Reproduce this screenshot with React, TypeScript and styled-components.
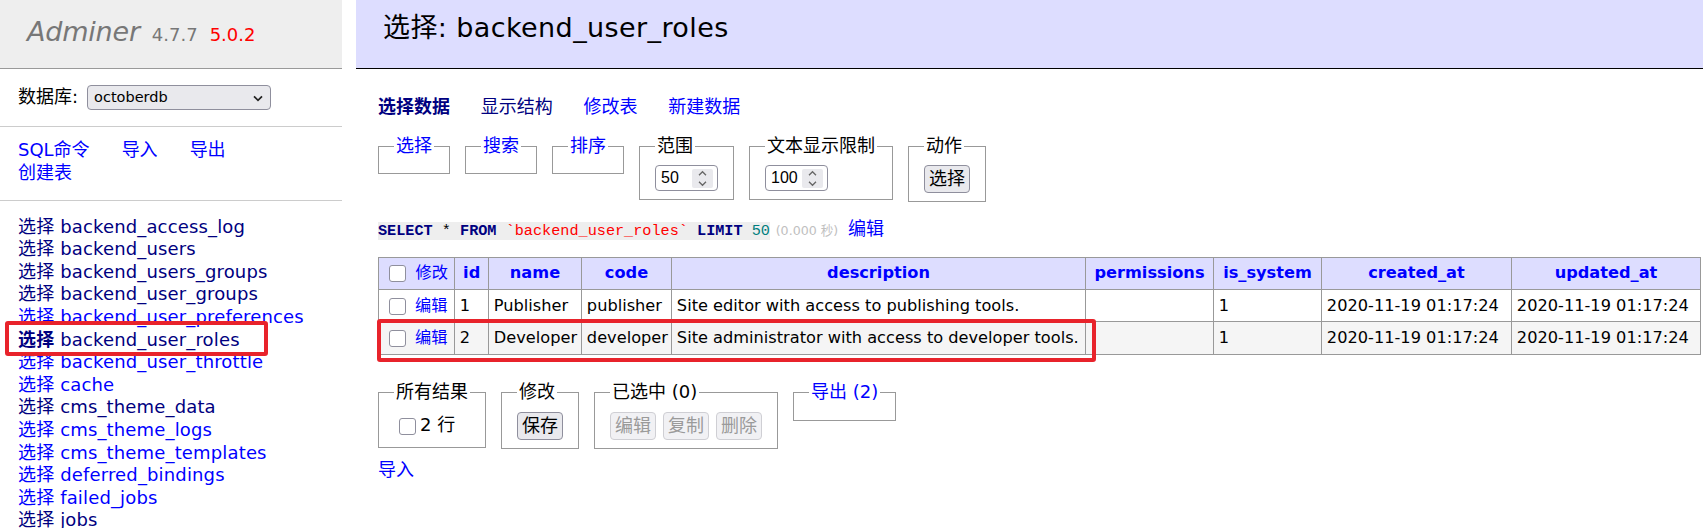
import React from "react";
import styled, { createGlobalStyle } from "styled-components";

const GlobalStyle = createGlobalStyle`
  html, body { margin: 0; padding: 0; background: #fff; }
  body {
    color: #000;
    font: 18px/1.25 "DejaVu Sans", "Noto Sans CJK SC", sans-serif;
  }
  a { text-decoration: none; }
`;

const Page = styled.div`
  display: flex;
  align-items: flex-start;
  width: 1703px;
`;

/* ---------- Sidebar ---------- */
const Sidebar = styled.aside`
  position: relative;
  flex: none;
  width: 342px;
  margin-right: 14px;
`;

const Brand = styled.h1`
  margin: 0;
  height: 53.3px;
  padding: 14.7px 27px 0;
  background: #eee;
  border-bottom: 1px solid #999;
  font-size: 27px;
  line-height: 34px;
  font-weight: normal;
  white-space: nowrap;
`;

const BrandName = styled.a`
  color: #777;
  font-style: italic;
  letter-spacing: -0.2px;
`;

const Version = styled.span`
  margin-left: 12px;
  font-size: 18px;
  color: #777;
`;

const VersionLink = styled.a`
  margin-left: 12px;
  color: red;
`;

const DbRow = styled.form`
  display: flex;
  align-items: center;
  height: 57px;
  padding: 0 18px;
  border-bottom: 1px solid #ccc;
`;

const SelectWrap = styled.span`
  position: relative;
  display: inline-flex;
  margin-left: 9px;
`;

const Select = styled.select`
  appearance: none;
  -webkit-appearance: none;
  box-sizing: border-box;
  width: 184px;
  height: 25px;
  padding: 0 24px 0 6px;
  border: 1px solid #8f8f9d;
  border-radius: 4px;
  background: #e9e9ed;
  color: #000;
  font: 14.5px "DejaVu Sans", sans-serif;
`;

const Chevron = styled.svg`
  position: absolute;
  right: 8px;
  top: 10px;
  pointer-events: none;
`;

const SideLinks = styled.div`
  padding: 12.5px 18px 16px;
  border-bottom: 1px solid #ccc;
`;

const SideLinkRow = styled.div`
  height: 22.5px;
  white-space: nowrap;
`;

const SideLink = styled.a`
  color: blue;
  margin-right: 32px;
`;

const TableList = styled.ul`
  margin: 0;
  padding: 14.2px 18px 0;
  list-style: none;
  white-space: nowrap;
  letter-spacing: 0.15px;
`;

const TableItem = styled.li`
  height: 22.6px;
`;

const NavLink = styled.a<{ $visited?: boolean; $active?: boolean }>`
  color: ${(p) => (p.$visited ? "navy" : "blue")};
  font-weight: ${(p) => (p.$active ? "bold" : "normal")};
`;

const SideHighlight = styled.div`
  position: absolute;
  left: 5px;
  top: 320.5px;
  width: 263px;
  height: 35px;
  box-sizing: border-box;
  border: 4px solid #e8232b;
  border-radius: 3px;
  pointer-events: none;
`;

/* ---------- Main ---------- */
const Main = styled.main`
  flex: 1;
  min-width: 0;
`;

const TitleBar = styled.h2`
  margin: 0;
  height: 57.5px;
  padding: 10.5px 27px 0;
  background: #ddf;
  border-bottom: 1px solid #000;
  font-size: 27px;
  line-height: 34px;
  font-weight: normal;
  letter-spacing: 0.4px;
  white-space: nowrap;
`;

const Content = styled.div`
  padding-left: 22px;
`;

const LinksRow = styled.p`
  margin: 26.5px 0 0;
  height: 22.5px;
  white-space: nowrap;
`;

const TabLink = styled.a<{ $visited?: boolean; $active?: boolean }>`
  color: ${(p) => (p.$visited ? "navy" : "blue")};
  font-weight: ${(p) => (p.$active ? "bold" : "normal")};
  margin-right: 25px;
`;

const FieldsetRow = styled.div<{ $top: number }>`
  display: flex;
  align-items: flex-start;
  gap: 15px;
  margin-top: ${(p) => p.$top}px;
`;

const Fieldset = styled.fieldset`
  margin: 0;
  min-width: 0;
  padding: 7.5px 15px 8px;
  border: 1px solid #999;
`;

const Legend = styled.legend<{ $link?: boolean }>`
  padding: 0 2px;
  height: 23px;
  line-height: 21px;
  white-space: nowrap;
  color: ${(p) => (p.$link ? "blue" : "#000")};
`;

const FieldBody = styled.div<{ $h?: number }>`
  display: flex;
  align-items: center;
  gap: 7px;
  height: ${(p) => (p.$h ? `${p.$h}px` : "auto")};
  white-space: nowrap;
`;

const NumberBox = styled.label`
  box-sizing: border-box;
  display: flex;
  align-items: center;
  width: 63px;
  height: 26px;
  padding: 0 4px 0 5px;
  border: 1px solid #8f8f9d;
  border-radius: 4px;
  background: #fff;
`;

const NumberInput = styled.input`
  flex: 1;
  min-width: 0;
  width: 0;
  border: 0;
  padding: 0;
  outline: none;
  background: transparent;
  color: #000;
  font: 16px "Liberation Sans", sans-serif;
`;

const Spinner = styled.svg`
  flex: none;
  background: #e9e9ed;
  border-radius: 2px;
`;

const Button = styled.button<{ $disabled?: boolean }>`
  box-sizing: border-box;
  display: inline-flex;
  align-items: center;
  justify-content: center;
  height: 28px;
  padding: 0 4px;
  border: 1px solid ${(p) => (p.$disabled ? "#cfcfd4" : "#8f8f9d")};
  border-radius: 4px;
  background: ${(p) => (p.$disabled ? "#f1f1f4" : "#e9e9ed")};
  color: ${(p) => (p.$disabled ? "#9a9a9a" : "#000")};
  font: 18px/20px "DejaVu Sans", "Noto Sans CJK SC", sans-serif;
`;

const Check = styled.input.attrs({ type: "checkbox" })`
  appearance: none;
  -webkit-appearance: none;
  box-sizing: border-box;
  width: 17px;
  height: 17px;
  margin: 0 4px 0 5px;
  border: 1px solid #8f8f9d;
  border-radius: 3px;
  background: #fff;
  vertical-align: middle;
`;

const QueryLine = styled.p`
  margin: 15.9px 0 0;
  height: 24px;
  white-space: nowrap;
`;

const Code = styled.code`
  background: #eee;
  font: 15.2px/1.25 "Liberation Mono", monospace;
`;

const Kw = styled.a`
  color: navy;
  font-weight: bold;
`;

const Bac = styled.span`
  color: red;
`;

const Num = styled.span`
  color: #007f7f;
`;

const Time = styled.span`
  color: silver;
  font-size: 12.6px;
`;

const EditLink = styled.a`
  margin-left: 4px;
  color: blue;
`;

const TableWrap = styled.div`
  position: relative;
  margin-top: 15.1px;
  width: 1322px;
`;

const Grid = styled.table`
  table-layout: fixed;
  width: 1322px;
  border-collapse: collapse;
  font-size: 16.2px;
`;

const HeadRow = styled.tr`
  height: 32px;
`;

const BodyRow = styled.tr<{ $odd?: boolean }>`
  height: 32.5px;
  background: ${(p) => (p.$odd ? "#f5f5f5" : "#fff")};
`;

const HeadCell = styled.th<{ $left?: boolean }>`
  padding: 3.24px ${(p) => (p.$left ? "4.86px" : "8.1px")};
  border: 1px solid #999;
  background: #ddf;
  text-align: ${(p) => (p.$left ? "left" : "center")};
  white-space: nowrap;
  overflow: hidden;
`;

const HeadLink = styled.a<{ $bold?: boolean }>`
  color: blue;
  font-weight: ${(p) => (p.$bold ? "bold" : "normal")};
`;

const Cell = styled.td`
  padding: 3.24px 4.86px;
  border: 1px solid #999;
  white-space: nowrap;
  overflow: hidden;
`;

const CellLink = styled.a`
  color: blue;
`;

const RowHighlight = styled.div`
  position: absolute;
  left: -1px;
  top: 62px;
  width: 719px;
  height: 43px;
  box-sizing: border-box;
  border: 4px solid #e8232b;
  border-radius: 3px;
  pointer-events: none;
`;

const ImportRow = styled.p`
  margin: 10.4px 0 0;
  height: 22.5px;
`;

const ImportLink = styled.a`
  color: blue;
`;

/* ---------- Data ---------- */
const tables: { name: string; visited?: boolean; active?: boolean }[] = [
  { name: "backend_access_log", visited: true },
  { name: "backend_users", visited: true },
  { name: "backend_users_groups", visited: true },
  { name: "backend_user_groups", visited: true },
  { name: "backend_user_preferences" },
  { name: "backend_user_roles", visited: true, active: true },
  { name: "backend_user_throttle" },
  { name: "cache" },
  { name: "cms_theme_data", visited: true },
  { name: "cms_theme_logs" },
  { name: "cms_theme_templates" },
  { name: "deferred_bindings" },
  { name: "failed_jobs" },
  { name: "jobs", visited: true },
];

const columns = ["id", "name", "code", "description", "permissions", "is_system", "created_at", "updated_at"];
const widths = [76, 34, 93, 90, 414, 128, 108, 190, 189];

const rows = [
  ["1", "Publisher", "publisher", "Site editor with access to publishing tools.", "", "1", "2020-11-19 01:17:24", "2020-11-19 01:17:24"],
  ["2", "Developer", "developer", "Site administrator with access to developer tools.", "", "1", "2020-11-19 01:17:24", "2020-11-19 01:17:24"],
];

const SpinIcon = () => (
  <Spinner width="21" height="19" viewBox="0 0 21 19">
    <path d="M7 6.2 L10.5 2.7 L14 6.2" fill="none" stroke="#666" strokeWidth="1.3" />
    <path d="M7 12.8 L10.5 16.3 L14 12.8" fill="none" stroke="#666" strokeWidth="1.3" />
  </Spinner>
);

const NumberField = ({ value }: { value: string }) => (
  <NumberBox>
    <NumberInput type="text" defaultValue={value} />
    <SpinIcon />
  </NumberBox>
);

export default function App() {
  return (
    <>
      <GlobalStyle />
      <Page>
        <Sidebar>
          <Brand>
            <BrandName>Adminer</BrandName>
            <Version>
              4.7.7
              <VersionLink>5.0.2</VersionLink>
            </Version>
          </Brand>
          <DbRow>
            数据库:
            <SelectWrap>
              <Select defaultValue="octoberdb">
                <option value="octoberdb">octoberdb</option>
              </Select>
              <Chevron width="10" height="7" viewBox="0 0 10 7">
                <path d="M1 1.3 L5 5.3 L9 1.3" fill="none" stroke="#222" strokeWidth="1.7" />
              </Chevron>
            </SelectWrap>
          </DbRow>
          <SideLinks>
            <SideLinkRow>
              <SideLink>SQL命令</SideLink>
              <SideLink>导入</SideLink>
              <SideLink>导出</SideLink>
            </SideLinkRow>
            <SideLinkRow>
              <SideLink>创建表</SideLink>
            </SideLinkRow>
          </SideLinks>
          <TableList>
            {tables.map((t) => (
              <TableItem key={t.name}>
                <NavLink $visited={t.visited} $active={t.active}>选择</NavLink>{" "}
                <NavLink $visited={t.visited}>{t.name}</NavLink>
              </TableItem>
            ))}
          </TableList>
          <SideHighlight />
        </Sidebar>

        <Main>
          <TitleBar>选择: backend_user_roles</TitleBar>
          <Content>
            <LinksRow>
              <TabLink $visited $active>选择数据</TabLink>{" "}
              <TabLink $visited>显示结构</TabLink>{" "}
              <TabLink>修改表</TabLink>{" "}
              <TabLink>新建数据</TabLink>
            </LinksRow>

            <FieldsetRow $top={16.5}>
              <Fieldset>
                <Legend $link>选择</Legend>
              </Fieldset>
              <Fieldset>
                <Legend $link>搜索</Legend>
              </Fieldset>
              <Fieldset>
                <Legend $link>排序</Legend>
              </Fieldset>
              <Fieldset>
                <Legend>范围</Legend>
                <FieldBody>
                  <NumberField value="50" />
                </FieldBody>
              </Fieldset>
              <Fieldset>
                <Legend>文本显示限制</Legend>
                <FieldBody>
                  <NumberField value="100" />
                </FieldBody>
              </Fieldset>
              <Fieldset>
                <Legend>动作</Legend>
                <FieldBody>
                  <Button type="button">选择</Button>
                </FieldBody>
              </Fieldset>
            </FieldsetRow>

            <QueryLine>
              <Code>
                <Kw>SELECT</Kw> * <Kw>FROM</Kw> <Bac>`backend_user_roles`</Bac> <Kw>LIMIT</Kw> <Num>50</Num>
              </Code>{" "}
              <Time>(0.000 秒)</Time>{" "}
              <EditLink>编辑</EditLink>
            </QueryLine>

            <TableWrap>
              <Grid>
                <colgroup>
                  {widths.map((w, i) => (
                    <col key={i} style={{ width: w }} />
                  ))}
                </colgroup>
                <thead>
                  <HeadRow>
                    <HeadCell $left>
                      <Check />{" "}
                      <HeadLink>修改</HeadLink>
                    </HeadCell>
                    {columns.map((c) => (
                      <HeadCell key={c}>
                        <HeadLink $bold>{c}</HeadLink>
                      </HeadCell>
                    ))}
                  </HeadRow>
                </thead>
                <tbody>
                  {rows.map((r, i) => (
                    <BodyRow key={i} $odd={i % 2 === 1}>
                      <Cell>
                        <Check />{" "}
                        <CellLink>编辑</CellLink>
                      </Cell>
                      {r.map((v, j) => (
                        <Cell key={j}>{v}</Cell>
                      ))}
                    </BodyRow>
                  ))}
                </tbody>
              </Grid>
              <RowHighlight />
            </TableWrap>

            <FieldsetRow $top={26.5}>
              <Fieldset>
                <Legend>所有结果</Legend>
                <FieldBody $h={27}>
                  <label>
                    <Check />2 行
                  </label>
                </FieldBody>
              </Fieldset>
              <Fieldset>
                <Legend>修改</Legend>
                <FieldBody>
                  <Button type="button">保存</Button>
                </FieldBody>
              </Fieldset>
              <Fieldset>
                <Legend>已选中 (0)</Legend>
                <FieldBody>
                  <Button type="button" $disabled>编辑</Button>
                  <Button type="button" $disabled>复制</Button>
                  <Button type="button" $disabled>删除</Button>
                </FieldBody>
              </Fieldset>
              <Fieldset>
                <Legend $link>导出 (2)</Legend>
              </Fieldset>
            </FieldsetRow>

            <ImportRow>
              <ImportLink>导入</ImportLink>
            </ImportRow>
          </Content>
        </Main>
      </Page>
    </>
  );
}
